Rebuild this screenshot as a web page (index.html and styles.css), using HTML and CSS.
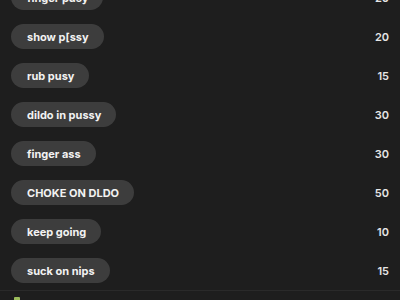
FILE: index.html
```html
<!DOCTYPE html>
<html>
<head>
<meta charset="utf-8">
<link rel="stylesheet" href="styles.css">
</head>
<body>
<div class="menu">
  <div class="row"><span class="pill">finger pusy</span><span class="amt">20</span></div>
  <div class="row"><span class="pill">show p[ssy</span><span class="amt">20</span></div>
  <div class="row"><span class="pill">rub pusy</span><span class="amt">15</span></div>
  <div class="row"><span class="pill">dildo in pussy</span><span class="amt">30</span></div>
  <div class="row"><span class="pill">finger ass</span><span class="amt">30</span></div>
  <div class="row"><span class="pill">CHOKE ON DLDO</span><span class="amt">50</span></div>
  <div class="row"><span class="pill">keep going</span><span class="amt">10</span></div>
  <div class="row"><span class="pill">suck on nips</span><span class="amt">15</span></div>
</div>
<div class="footer"><span class="ico"></span></div>
</body>
</html>
```
FILE: styles.css
```css
html, body {
  margin: 0;
  padding: 0;
  background: #1e1e1e;
  overflow: hidden;
  height: 300px;
}
body {
  font-family: Inter, "Noto Sans", sans-serif;
  color: #f2f2f2;
}
.menu {
  margin-top: -22px;
}
.row {
  height: 39px;
  display: flex;
  align-items: center;
  justify-content: space-between;
  padding: 0 11px;
}
.pill {
  height: 25px;
  display: flex;
  align-items: center;
  padding: 0 15px 0 16px;
  background: #3d3d3d;
  border-radius: 13px;
  font-size: 11px;
  font-weight: 700;
}
.amt {
  font-size: 11px;
  font-weight: 600;
  color: #e6e6e6;
}
.footer {
  border-top: 1px solid #2a2a2a;
  padding: 6px 14px 0;
}
.ico {
  display: block;
  width: 6px;
  height: 8px;
  background: #9cbc5c;
  border-radius: 1px;
}
```
